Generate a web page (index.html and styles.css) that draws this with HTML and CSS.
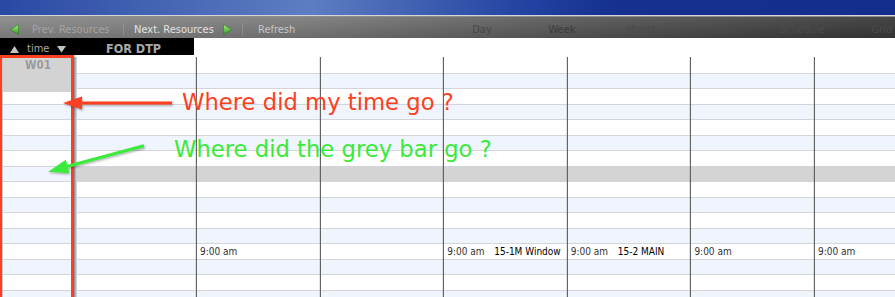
FILE: index.html
```html
<!DOCTYPE html>
<html>
<head>
<meta charset="utf-8">
<link rel="stylesheet" href="styles.css">
</head>
<body>
<div class="page">
  <div class="titlebar"></div>
  <div class="tsep"></div>
  <div class="toolbar">
    <svg class="tb-ico ico-prev" width="9" height="11" viewBox="0 0 9 11">
      <defs><linearGradient id="gl" x1="0" y1="0" x2="0" y2="1"><stop offset="0" stop-color="#a8f07c"/><stop offset="1" stop-color="#2e9c22"/></linearGradient></defs>
      <polygon points="0.5,5.5 8.5,0.5 8.5,10.5" fill="url(#gl)" stroke="#2b7c1f" stroke-width="0.6"/>
    </svg>
    <span class="tb-label w-prev">Prev. Resources</span>
    <span class="tb-sep"></span>
    <span class="tb-label w-next">Next. Resources</span>
    <svg class="tb-ico ico-next" width="9" height="11" viewBox="0 0 9 11">
      <defs><linearGradient id="gr" x1="0" y1="0" x2="0" y2="1"><stop offset="0" stop-color="#a8f07c"/><stop offset="1" stop-color="#2e9c22"/></linearGradient></defs>
      <polygon points="8.5,5.5 0.5,0.5 0.5,10.5" fill="url(#gr)" stroke="#2b7c1f" stroke-width="0.6"/>
    </svg>
    <span class="tb-sep sep2"></span>
    <span class="tb-label w-ref">Refresh</span>
    <div class="tabs">
      <span class="tab t-day">Day</span>
      <span class="tab t-week">Week</span>
      <span class="tab t-dark">Month</span>
      <span class="tab t-dark">Year</span>
      <span class="tab t-dark">Schedule</span>
      <span class="tab t-dark">Grid</span>
    </div>
  </div>
  <div class="hdr">
    <div class="hdr-black">
      <div class="hdr-sort">
        <svg class="tri" width="9" height="7" viewBox="0 0 9 7"><polygon points="4.5,0 9,7 0,7" fill="#c4c4c4"/></svg>
        <span class="hdr-time">time</span>
        <svg class="tri" width="9" height="7" viewBox="0 0 9 7"><polygon points="0,0 9,0 4.5,6.5" fill="#c4c4c4"/></svg>
      </div>
      <span class="hdr-res">FOR DTP</span>
    </div>
  </div>
  <div class="grid">
    <div class="timecol">
      <div class="w01">W01</div>
      <div class="tgap"></div>
      <div class="s"></div><div class="s"></div><div class="s"></div><div class="s"></div>
      <div class="s"></div><div class="s"></div><div class="s"></div><div class="s"></div>
      <div class="s"></div><div class="s"></div><div class="s"></div><div class="s"></div>
      <div class="s"></div>
    </div>
    <div class="days">
      <div class="day first">
        <div class="s"></div><div class="s"></div><div class="s"></div><div class="s"></div>
        <div class="s"></div><div class="s"></div><div class="s"></div><div class="s g"></div>
        <div class="s"></div><div class="s"></div><div class="s"></div><div class="s"></div>
        <div class="s"></div><div class="s"></div><div class="s"></div><div class="s"></div>
      </div>
      <div class="day">
        <div class="s"></div><div class="s"></div><div class="s"></div><div class="s"></div>
        <div class="s"></div><div class="s"></div><div class="s"></div><div class="s g"></div>
        <div class="s"></div><div class="s"></div><div class="s"></div><div class="s"></div>
        <div class="s"><div class="ev"><span class="ev-t">9:00 am</span></div></div>
        <div class="s"></div><div class="s"></div><div class="s"></div>
      </div>
      <div class="day">
        <div class="s"></div><div class="s"></div><div class="s"></div><div class="s"></div>
        <div class="s"></div><div class="s"></div><div class="s"></div><div class="s g"></div>
        <div class="s"></div><div class="s"></div><div class="s"></div><div class="s"></div>
        <div class="s"></div><div class="s"></div><div class="s"></div><div class="s"></div>
      </div>
      <div class="day">
        <div class="s"></div><div class="s"></div><div class="s"></div><div class="s"></div>
        <div class="s"></div><div class="s"></div><div class="s"></div><div class="s g"></div>
        <div class="s"></div><div class="s"></div><div class="s"></div><div class="s"></div>
        <div class="s"><div class="ev"><span class="ev-t">9:00 am</span><span class="ev-n">15-1M Window</span></div></div>
        <div class="s"></div><div class="s"></div><div class="s"></div>
      </div>
      <div class="day">
        <div class="s"></div><div class="s"></div><div class="s"></div><div class="s"></div>
        <div class="s"></div><div class="s"></div><div class="s"></div><div class="s g"></div>
        <div class="s"></div><div class="s"></div><div class="s"></div><div class="s"></div>
        <div class="s"><div class="ev"><span class="ev-t">9:00 am</span><span class="ev-n">15-2 MAIN</span></div></div>
        <div class="s"></div><div class="s"></div><div class="s"></div>
      </div>
      <div class="day">
        <div class="s"></div><div class="s"></div><div class="s"></div><div class="s"></div>
        <div class="s"></div><div class="s"></div><div class="s"></div><div class="s g"></div>
        <div class="s"></div><div class="s"></div><div class="s"></div><div class="s"></div>
        <div class="s"><div class="ev"><span class="ev-t">9:00 am</span></div></div>
        <div class="s"></div><div class="s"></div><div class="s"></div>
      </div>
      <div class="day">
        <div class="s"></div><div class="s"></div><div class="s"></div><div class="s"></div>
        <div class="s"></div><div class="s"></div><div class="s"></div><div class="s g"></div>
        <div class="s"></div><div class="s"></div><div class="s"></div><div class="s"></div>
        <div class="s"><div class="ev"><span class="ev-t">9:00 am</span></div></div>
        <div class="s"></div><div class="s"></div><div class="s"></div>
      </div>
    </div>
  </div>

  <div class="annot">
    <div class="redbox"></div>
    <svg class="arrows" width="895" height="297" viewBox="0 0 895 297">
      <defs>
        <filter id="sh" x="-20%" y="-50%" width="140%" height="200%">
          <feDropShadow dx="0.8" dy="1.2" stdDeviation="0.9" flood-color="#000" flood-opacity="0.35"/>
        </filter>
      </defs>
      <g filter="url(#sh)">
        <line x1="172" y1="103" x2="78" y2="103" stroke="#fc3f20" stroke-width="3.2"/>
        <polygon points="63,103 82,96.5 82,109.5" fill="#fc3f20"/>
      </g>
      <g filter="url(#sh)">
        <line x1="144" y1="145.7" x2="66" y2="166.8" stroke="#3aea3a" stroke-width="3.2"/>
        <polygon points="48.3,171.7 69.4,173.2 65.8,159.7" fill="#3aea3a"/>
      </g>
    </svg>
    <div class="note red">Where did my time go ?</div>
    <div class="note green">Where did the grey bar go ?</div>
  </div>
</div>
</body>
</html>
```

FILE: styles.css
```css
* { box-sizing: border-box; }
html, body { margin: 0; padding: 0; }
body {
  width: 895px;
  height: 297px;
  overflow: hidden;
  background: #fff;
  font-family: "DejaVu Sans Condensed", "DejaVu Sans", sans-serif;
}
.page {
  position: relative;
  width: 895px;
  height: 297px;
  overflow: hidden;
}

/* title bar */
.titlebar {
  height: 15px;
  background: linear-gradient(to right, #2a49a4 0px, #5d7ec2 310px, #2443a2 520px, #15308f 620px, #142e8e 895px);
}
.tsep {
  height: 2px;
  background: linear-gradient(#d4d6da 0 1px, #8c8c8c 1px 2px);
}

/* toolbar */
.toolbar {
  height: 21px;
  display: flex;
  align-items: flex-start;
  padding-left: 10px;
  background:
    linear-gradient(rgba(255,255,255,0.07), rgba(0,0,0,0.12)),
    linear-gradient(to right, #888888 0px, #7c7c7c 300px, #545454 600px, #383838 895px);
  font-size: 11px;
  white-space: nowrap;
  overflow: hidden;
}
.tb-ico { flex: none; margin-top: 7px; display: block; }
.ico-prev { margin-right: 13px; }
.ico-next { margin-right: 10px; }
.tb-label { flex: none; line-height: 13px; margin-top: 6px; }
.w-prev { width: 91px; color: #a4a4a4; }
.w-next { width: 89px; color: #e2e2e2; }
.w-ref { width: 184px; color: #c6c6c6; }
.tb-sep {
  flex: none;
  width: 1px;
  height: 13px;
  margin-top: 6px;
  margin-right: 10px;
  background: rgba(255,255,255,0.14);
}
.tb-sep.sep2 { margin-right: 15px; }
.tabs { display: flex; flex: none; }
.tab {
  flex: none;
  width: 80px;
  text-align: center;
  line-height: 13px;
  margin-top: 6px;
}
.t-day { color: #474747; }
.t-week { color: #3c3c3c; }
.t-dark { color: #4b4b4b; }

/* header */
.hdr { height: 17px; margin-bottom: 2px; }
.hdr-black {
  width: 194px;
  height: 17px;
  background: #000;
  display: flex;
  align-items: flex-start;
  padding-left: 10px;
  color: #ababab;
}
.hdr-sort { width: 96px; display: flex; align-items: flex-start; flex: none; }
.tri { display: block; flex: none; margin-top: 8px; }
.hdr-time {
  font-size: 11px;
  line-height: 15px;
  margin: 3px 8px 0 8px;
}
.hdr-res {
  font-size: 12.5px;
  font-weight: bold;
  line-height: 15px;
  margin-top: 3px;
  color: #a8a8a8;
}

/* grid */
.grid {
  display: flex;
  height: 240px;
  overflow: hidden;
}
.timecol {
  flex: none;
  width: 77px;
  padding: 0 4px 0 3px;
  background:
    linear-gradient(to right, #9ca0a8, #dcdee4) right top / 4px 100% no-repeat,
    linear-gradient(#c4c6cc, #c4c6cc) left top / 3px 100% no-repeat,
    #fff;
}
.w01 {
  height: 35px;
  background: #d3d3d3;
  color: #9a9a9a;
  font-weight: bold;
  font-size: 11.5px;
  line-height: 13px;
  padding-top: 2px;
  text-align: center;
}
.tgap { height: 12px; background: #fff; }
.timecol .s { border-top: 1px solid #d3d5db; }
.timecol .s:nth-child(odd) { height: 15px; background: #f0f4fd; }
.timecol .s:nth-child(even) { height: 16px; background: #fff; }

.days {
  flex: 1;
  display: flex;
  overflow: hidden;
}
.day {
  flex: none;
  width: 123.6px;
  border-left: 1px solid #636363;
  box-shadow: -1px 0 0 rgba(0,0,0,0.1);
}
.day.first {
  width: 119px;
  border-left: none;
  box-shadow: none;
}
.day .s { border-top: 1px solid #d3d5db; }
.day .s:first-child { border-top: none; }
.day .s:nth-child(odd) { height: 16px; background: #fff; }
.day .s:nth-child(even) { height: 15px; background: #f0f4fd; }
.day .s.g { background: #d4d4d4; }

.ev {
  display: flex;
  padding-left: 3px;
  font-size: 10px;
  line-height: 15px;
  white-space: nowrap;
  overflow: hidden;
}
.ev-t { flex: none; width: 47px; color: #333; }
.ev-n { color: #000; }

/* annotations drawn over the screenshot */
.annot {
  position: absolute;
  left: 0;
  top: 0;
  width: 895px;
  height: 297px;
  pointer-events: none;
}
.redbox {
  position: absolute;
  left: -1px;
  top: 55px;
  width: 75px;
  height: 260px;
  border: 3px solid #fc3f20;
  box-shadow: 1px 1px 2px rgba(0,0,0,0.3);
}
.arrows {
  position: absolute;
  left: 0;
  top: 0;
}
.note {
  position: absolute;
  font-family: "DejaVu Sans", sans-serif;
  font-size: 22.7px;
  line-height: 27px;
  white-space: nowrap;
}
.note.red { left: 182px; top: 89px; color: #fc3f20; }
.note.green { left: 174px; top: 136px; color: #3aea3a; }
```
